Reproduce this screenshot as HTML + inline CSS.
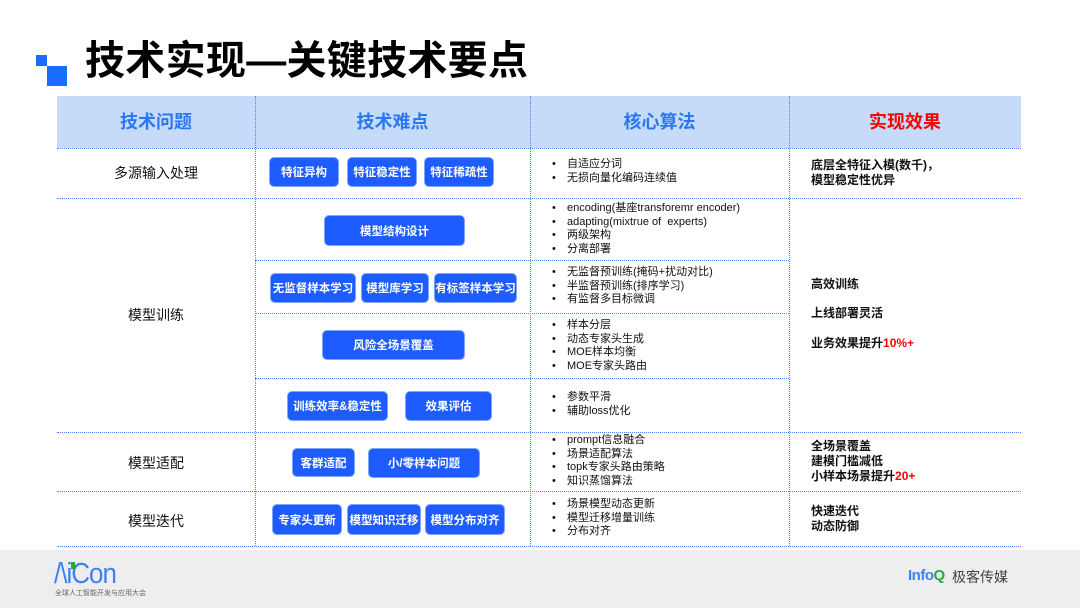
<!DOCTYPE html>
<html><head><meta charset="utf-8"><style>
*{margin:0;padding:0;box-sizing:border-box}
body{width:1080px;height:608px;background:#fff;position:relative;overflow:hidden;font-family:"Liberation Sans","Noto Sans CJK SC",sans-serif;color:#111}
.a{position:absolute}
.hl{position:absolute;border-top:1px dotted #4a86e8;height:0}
.vl{position:absolute;border-left:1px dotted #4a86e8;width:0}
.btn{position:absolute;background:#1f5cff;border:1px solid #7fa6ff;border-radius:5px;color:#fff;font-size:11.5px;font-weight:bold;display:flex;align-items:center;justify-content:center;white-space:nowrap}
.c1{position:absolute;left:57px;width:198px;text-align:center;font-size:14px}
.ul{position:absolute;left:552px;font-size:11px;line-height:13.5px;list-style:none}
.ul li:before{content:"•";display:inline-block;width:15px}
.res{position:absolute;left:811px;font-size:12px;font-weight:bold;line-height:15px}
.h{position:absolute;top:96px;height:52px;line-height:52px;text-align:center;font-size:18px;font-weight:bold;color:#2a78f0}
</style></head><body>
<div class="a" style="left:36px;top:55px;width:11px;height:11px;background:#1a6dff"></div>
<div class="a" style="left:47px;top:66px;width:20px;height:20px;background:#1a6dff"></div>
<div class="a" style="left:85px;top:35px;font-size:40px;font-weight:bold;line-height:52px;color:#000;letter-spacing:0.3px">技术实现—关键技术要点</div>

<div class="a" style="left:57px;top:96px;width:964px;height:52px;background:#c6dbfa"></div>
<div class="h" style="left:57px;width:198px">技术问题</div>
<div class="h" style="left:255px;width:275px">技术难点</div>
<div class="h" style="left:530px;width:259px">核心算法</div>
<div class="h" style="left:789px;width:232px;color:#f00">实现效果</div>

<div class="vl" style="left:255px;top:96px;height:450px"></div>
<div class="vl" style="left:530px;top:96px;height:450px"></div>
<div class="vl" style="left:789px;top:96px;height:450px"></div>
<div class="hl" style="left:57px;top:148px;width:964px"></div>
<div class="hl" style="left:57px;top:198px;width:964px"></div>
<div class="hl" style="left:255px;top:260px;width:534px"></div>
<div class="hl" style="left:255px;top:313px;width:534px"></div>
<div class="hl" style="left:255px;top:378px;width:534px"></div>
<div class="hl" style="left:57px;top:432px;width:964px"></div>
<div class="hl" style="left:57px;top:491px;width:964px"></div>
<div class="hl" style="left:57px;top:546px;width:964px"></div>

<div class="c1" style="top:163px">多源输入处理</div>
<div class="c1" style="top:305px">模型训练</div>
<div class="c1" style="top:453px">模型适配</div>
<div class="c1" style="top:511px">模型迭代</div>

<div class="btn" style="left:269px;top:157px;width:70px;height:30px">特征异构</div>
<div class="btn" style="left:347px;top:157px;width:70px;height:30px">特征稳定性</div>
<div class="btn" style="left:424px;top:157px;width:70px;height:30px">特征稀疏性</div>
<div class="btn" style="left:324px;top:215px;width:141px;height:31px">模型结构设计</div>
<div class="btn" style="left:270px;top:273px;width:86px;height:30px">无监督样本学习</div>
<div class="btn" style="left:361px;top:273px;width:68px;height:30px">模型库学习</div>
<div class="btn" style="left:434px;top:273px;width:83px;height:30px">有标签样本学习</div>
<div class="btn" style="left:322px;top:330px;width:143px;height:30px">风险全场景覆盖</div>
<div class="btn" style="left:287px;top:391px;width:101px;height:30px">训练效率&amp;稳定性</div>
<div class="btn" style="left:405px;top:391px;width:87px;height:30px">效果评估</div>
<div class="btn" style="left:292px;top:448px;width:63px;height:29px">客群适配</div>
<div class="btn" style="left:368px;top:448px;width:112px;height:30px">小/零样本问题</div>
<div class="btn" style="left:272px;top:504px;width:70px;height:31px">专家头更新</div>
<div class="btn" style="left:347px;top:504px;width:74px;height:31px">模型知识迁移</div>
<div class="btn" style="left:425px;top:504px;width:80px;height:31px">模型分布对齐</div>

<ul class="ul" style="top:158px"><li>自适应分词</li><li>无损向量化编码连续值</li></ul>
<ul class="ul" style="top:202px"><li>encoding(基座transforemr encoder)</li><li>adapting(mixtrue of &nbsp;experts)</li><li>两级架构</li><li>分离部署</li></ul>
<ul class="ul" style="top:266px"><li>无监督预训练(掩码+扰动对比)</li><li>半监督预训练(排序学习)</li><li>有监督多目标微调</li></ul>
<ul class="ul" style="top:319px"><li>样本分层</li><li>动态专家头生成</li><li>MOE样本均衡</li><li>MOE专家头路由</li></ul>
<ul class="ul" style="top:391px"><li>参数平滑</li><li>辅助loss优化</li></ul>
<ul class="ul" style="top:434px"><li>prompt信息融合</li><li>场景适配算法</li><li>topk专家头路由策略</li><li>知识蒸馏算法</li></ul>
<ul class="ul" style="top:498px"><li>场景模型动态更新</li><li>模型迁移增量训练</li><li>分布对齐</li></ul>

<div class="res" style="top:158px">底层全特征入模(数千)，<br>模型稳定性优异</div>
<div class="res" style="top:277px">高效训练</div>
<div class="res" style="top:306px">上线部署灵活</div>
<div class="res" style="top:336px">业务效果提升<span style="color:#f00">10%+</span></div>
<div class="res" style="top:439px">全场景覆盖<br>建模门槛减低<br>小样本场景提升<span style="color:#f00">20+</span></div>
<div class="res" style="top:504px">快速迭代<br>动态防御</div>

<div class="a" style="left:0;top:550px;width:1080px;height:58px;background:#eeeeee"></div>
<div class="a" style="left:54px;top:558px;font-size:26px;color:#3b82f6;letter-spacing:-1px;transform:scaleY(1.1);font-family:'Liberation Sans',sans-serif">/\iCon</div>
<div class="a" style="left:71px;top:562px;width:4px;height:7px;background:#22aa44"></div>
<div class="a" style="left:55px;top:588px;font-size:7px;color:#666">全球人工智能开发与应用大会</div>
<div class="a" style="left:908px;top:567px;font-size:15px;font-weight:bold;color:#3b82f6;letter-spacing:-0.5px">Info<span style="color:#22aa44">Q</span></div>
<div class="a" style="left:952px;top:567px;font-size:14px;color:#444">极客传媒</div>
</body></html>
